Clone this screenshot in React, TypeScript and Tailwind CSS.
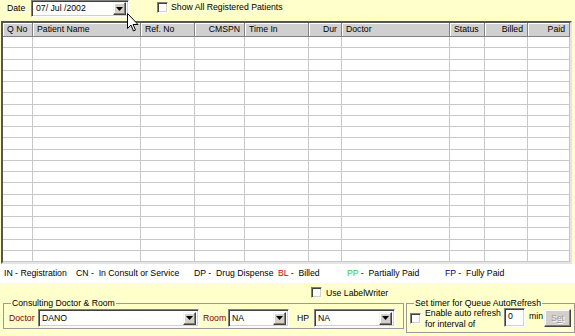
const cols = [
  { label: "Q No", w: 30, align: "left" },
  { label: "Patient Name", w: 108, align: "left" },
  { label: "Ref. No", w: 54, align: "left" },
  { label: "CMSPN", w: 50, align: "right" },
  { label: "Time In", w: 64, align: "left" },
  { label: "Dur", w: 33, align: "right" },
  { label: "Doctor", w: 108, align: "left" },
  { label: "Status", w: 35, align: "left" },
  { label: "Billed", w: 43, align: "right" },
  { label: "Paid", w: 42, align: "right" },
];

const rows = Array.from({ length: 20 }, (_, i) => i);

const sunken =
  "bg-white border border-t-[#808080] border-l-[#808080] border-r-white border-b-white shadow-[inset_1px_1px_0_#404040,inset_-1px_-1px_0_#d4d0c8]";
const raised =
  "bg-[#d4d0c8] border border-t-[#f4f4f4] border-l-[#f4f4f4] border-r-[#404040] border-b-[#404040] shadow-[inset_-1px_-1px_0_#808080,inset_1px_1px_0_#ffffff]";
const etched = "border border-[#9a9a9a]";

function Arrow() {
  return (
    <svg width="7" height="4" viewBox="0 0 7 4">
      <path d="M0 0h7L3.5 4z" fill="#000" />
    </svg>
  );
}

function Combo({ text, className }: { text: string; className: string }) {
  return (
    <div className={`${sunken} ${className} flex items-center pl-[3px] pr-[2px]`}>
      <span className="flex-1 truncate">{text}</span>
      <div className={`${raised} w-[13px] h-[13px] flex items-center justify-center`}>
        <Arrow />
      </div>
    </div>
  );
}

function Check({ className = "" }: { className?: string }) {
  return <div className={`${sunken} w-[11px] h-[11px] shrink-0 ${className}`} />;
}

export default function App() {
  return (
    <div className="relative w-[575px] h-[336px] overflow-hidden bg-[#ffffcc] text-black font-['Liberation_Sans',Arial,sans-serif] text-[8.7px] leading-none">
      {/* top bar */}
      <div className="h-[21px] flex items-start">
        <span className="ml-[7px] mt-[4px] w-[24px]">Date</span>
        <Combo text="07/ Jul /2002" className="w-[98px] h-[17px] pl-[4px]" />
        <div className="ml-[28px] mt-[2px] flex items-center gap-[3px]">
          <Check />
          <span>Show All Registered Patients</span>
        </div>
      </div>

      {/* grid */}
      <div className="ml-[1px] w-[571px] border-2 border-t-[#555555] border-l-[#555555] border-r-[#e4e4e4] border-b-[#e4e4e4] bg-white">
        <div className="flex h-[14px]">
          {cols.map((c) => (
            <div
              key={c.label}
              style={{ width: c.w }}
              className={`shrink-0 h-full bg-[#d0d0d0] border-r border-b border-[#808080] shadow-[inset_1px_1px_0_#ffffff] flex items-center px-[4px] ${
                c.align === "right" ? "justify-end" : "justify-start"
              }`}
            >
              {c.label}
            </div>
          ))}
        </div>
        {rows.map((r) => (
          <div key={r} className="flex h-[11.25px]">
            {cols.map((c) => (
              <div
                key={c.label}
                style={{ width: c.w }}
                className="shrink-0 h-full border-r border-b border-[#c8c8c8]"
              />
            ))}
          </div>
        ))}
      </div>

      {/* legend */}
      <div className="h-[19px] bg-white flex items-center pl-[4px] whitespace-pre">
        <span className="w-[72px]">IN - Registration</span>
        <span className="w-[118px]">CN -  In Consult or Service</span>
        <span className="w-[84px]">DP -  Drug Dispense</span>
        <span className="w-[69px]">
          <span className="text-[#cc0000]">BL</span> -  Billed
        </span>
        <span className="w-[98px]">
          <span className="text-[#33cc33]">PP</span> -  Partially Paid
        </span>
        <span>
          <span className="text-[#000080]">FP</span> -  Fully Paid
        </span>
      </div>

      {/* label writer */}
      <div className="h-[15px] flex items-start pl-[311px] pt-[4px] gap-[4px]">
        <Check />
        <span className="mt-[2px]">Use LabelWriter</span>
      </div>

      {/* groups */}
      <div className="flex items-start pl-[3px] gap-[2px]">
        <fieldset className={`w-[401px] h-[31px] ${etched} px-[5px]`}>
          <legend className="px-[1px] ml-[2px] leading-[11px]">Consulting Doctor &amp; Room</legend>
          <div className="flex items-center">
            <span className="text-[#800000] w-[29px]">Doctor</span>
            <Combo text="DANO" className="w-[161px] h-[18px]" />
            <span className="text-[#800000] ml-[4px] w-[25px]">Room</span>
            <Combo text="NA" className="w-[61px] h-[18px]" />
            <span className="ml-[8px] w-[17px]">HP</span>
            <Combo text="NA" className="w-[81px] h-[18px]" />
          </div>
        </fieldset>
        <fieldset className={`w-[167px] h-[35px] ${etched} px-[3px]`}>
          <legend className="px-[1px] ml-[4px] leading-[11px]">Set timer for Queue AutoRefresh</legend>
          <div className="flex items-start">
            <Check className="mt-[4px]" />
            <div className="ml-[4px] flex flex-col gap-[2px] w-[79px]">
              <span>Enable auto refresh</span>
              <span>for interval of</span>
            </div>
            <div className={`${sunken} w-[21px] h-[19px] -mt-[1px] pl-[3px] pt-[3px]`}>0</div>
            <span className="ml-[4px] mt-[3px] w-[15px]">min</span>
            <div className={`${raised} w-[27px] h-[18px] flex items-center justify-center text-[#9a9a9a] [text-shadow:1px_1px_0_#ffffff]`}>
              S<span className="underline">e</span>t
            </div>
          </div>
        </fieldset>
      </div>

      {/* mouse cursor */}
      <svg className="absolute left-[127px] top-[13px]" width="12" height="19" viewBox="0 0 12 19">
        <path
          d="M0.5 0.5 L0.5 15.5 L4 12 L6.5 18 L8.5 17 L6 11.5 L11 11.5 Z"
          fill="#ffffff"
          stroke="#000000"
          strokeWidth="1"
        />
      </svg>
    </div>
  );
}
